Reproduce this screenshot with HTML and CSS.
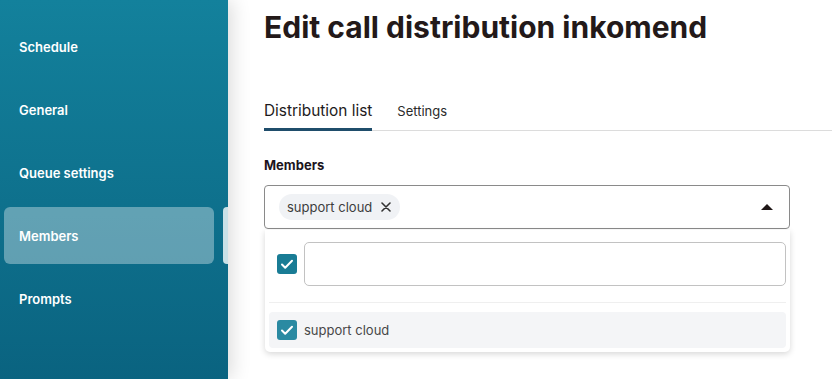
FILE: index.html
```html
<!DOCTYPE html>
<html lang="en">

<head>
  <meta charset="UTF-8">
  <meta name="viewport" content="width=device-width, initial-scale=1.0">
  <title>Edit call distribution</title>
  <link rel="stylesheet" href="styles.css">
</head>

<body>
  <div class="layout">
    <nav class="sidebar">
      <a class="nav-item">Schedule</a>
      <a class="nav-item">General</a>
      <a class="nav-item">Queue settings</a>
      <a class="nav-item active">Members</a>
      <a class="nav-item">Prompts</a>
    </nav>

    <main class="main">
      <h1 class="page-title">Edit call distribution inkomend</h1>

      <div class="tabs">
        <div class="tab active">Distribution list</div>
        <div class="tab">Settings</div>
      </div>

      <div class="field">
        <label class="field-label">Members</label>
        <div class="select">
          <span class="chip">
            support cloud
            <svg class="chip-close" viewBox="0 0 10 10" width="10" height="10"><path d="M1 1l8 8M9 1l-8 8" stroke="#333" stroke-width="1.6" stroke-linecap="round"/></svg>
          </span>
          <span class="caret"></span>
        </div>

        <div class="dropdown">
          <div class="search-row">
            <span class="checkbox">
              <svg viewBox="0 0 20 20" width="20" height="20"><path d="M5 10.5l3.2 3.2L15 6.8" fill="none" stroke="#fff" stroke-width="2" stroke-linecap="round" stroke-linejoin="round"/></svg>
            </span>
            <input class="search-input" type="text">
          </div>
          <div class="option">
            <span class="checkbox light">
              <svg viewBox="0 0 20 20" width="20" height="20"><path d="M5 10.5l3.2 3.2L15 6.8" fill="none" stroke="#fff" stroke-width="2" stroke-linecap="round" stroke-linejoin="round"/></svg>
            </span>
            <span class="option-text">support cloud</span>
          </div>
        </div>
      </div>
    </main>
  </div>
</body>

</html>
```

FILE: styles.css
```css
* {
  margin: 0;
  padding: 0;
  box-sizing: border-box;
}

html,
body {
  height: 100%;
  font-family: Inter, "Noto Sans", sans-serif;
  overflow: hidden;
}

.layout {
  display: flex;
  height: 100%;
}

/* Left navigation */
.sidebar {
  position: relative;
  z-index: 2;
  width: 228px;
  flex-shrink: 0;
  display: flex;
  flex-direction: column;
  gap: 6px;
  padding: 18px 14px 0 4px;
  background: linear-gradient(to bottom, #13819c, #0a6380);
  box-shadow: 4px 0 18px rgba(0, 0, 0, 0.14);
}

.nav-item {
  position: relative;
  display: flex;
  align-items: center;
  height: 57px;
  padding-left: 15px;
  border-radius: 6px;
  color: #fff;
  font-size: 13px;
  font-weight: 600;
}

.nav-item.active {
  background-color: rgba(255, 255, 255, 0.35);
}

/* little tab sticking out from the active item */
.nav-item.active::after {
  content: "";
  position: absolute;
  top: 0;
  right: -14px;
  width: 5px;
  height: 100%;
  background: #c9e1e7;
  border-radius: 4px 0 0 4px;
}

/* Main content */
.main {
  flex: 1;
  padding: 9px 0 0 36px;
  background: #fff;
  color: #231919;
}

.page-title {
  font-size: 30px;
  font-weight: 700;
  line-height: 36px;
}

.tabs {
  display: flex;
  align-items: baseline;
  gap: 25px;
  margin-top: 56px;
  border-bottom: 1px solid #dcdcdc;
}

.tab {
  padding-bottom: 7px;
  font-size: 13px;
  line-height: 20px;
  color: #2a2a2a;
}

.tab.active {
  font-size: 15.4px;
  color: #1d1a20;
  border-bottom: 3px solid #1f4d6b;
  margin-bottom: -1px;
}

.field {
  width: 526px;
  margin-top: 26px;
}

.field-label {
  display: block;
  font-size: 13px;
  font-weight: 700;
  color: #1c1420;
  margin-bottom: 12px;
}

.select {
  display: flex;
  align-items: center;
  justify-content: space-between;
  height: 44px;
  padding: 0 14px;
  border: 1px solid #8a8a8a;
  border-radius: 4px;
}

.chip {
  display: flex;
  align-items: center;
  gap: 9px;
  height: 26px;
  padding: 0 9px 0 8px;
  background: #f0f2f5;
  border-radius: 13px;
  font-size: 13px;
  color: #3d3d3d;
}

.caret {
  width: 0;
  height: 0;
  margin-right: 2px;
  border-left: 6px solid transparent;
  border-right: 6px solid transparent;
  border-bottom: 6px solid #1f1616;
}

.dropdown {
  margin: 1px 0 0 1px;
  padding: 12px 4px 4px 4px;
  background: #fff;
  border-radius: 0 0 5px 5px;
  box-shadow: 0 2px 6px rgba(0, 0, 0, 0.16);
}

.search-row {
  display: flex;
  align-items: center;
  gap: 7px;
  padding: 0 0 16px 8px;
  border-bottom: 1px solid #efefef;
  margin-bottom: 9px;
}

.checkbox {
  display: flex;
  width: 20px;
  height: 20px;
  flex-shrink: 0;
  border-radius: 3px;
  background: #197c95;
}

.checkbox.light {
  background: #2a8aa2;
}

.search-input {
  flex: 1;
  height: 44px;
  border: 1px solid #c2c2c2;
  border-radius: 5px;
  outline: none;
}

.option {
  display: flex;
  align-items: center;
  gap: 7px;
  height: 36px;
  padding-left: 8px;
  background: #f4f5f7;
  border-radius: 4px;
}

.option-text {
  font-size: 13px;
  color: #474747;
}
```
